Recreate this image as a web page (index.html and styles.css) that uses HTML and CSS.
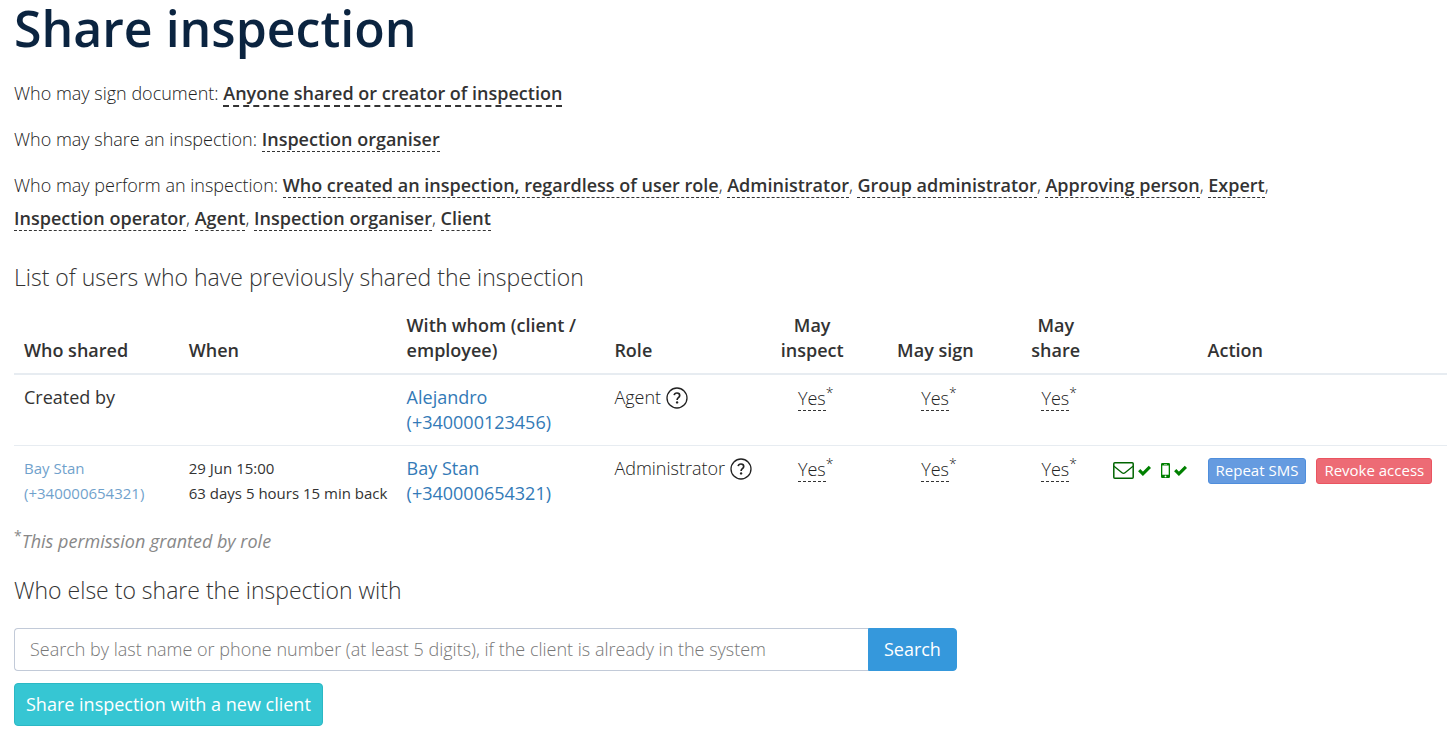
FILE: index.html
```
<!DOCTYPE html>
<html lang="en">
  <head>
    <meta charset="UTF-8" />
    <meta name="viewport" content="width=device-width, initial-scale=1.0" />
    <title>Share inspection</title>
    <link rel="stylesheet" href="styles.css">
  </head>
  <body>
    <svg class="sprite" aria-hidden="true">
      <symbol id="icon-help" viewBox="0 0 22 22">
        <circle cx="11" cy="11" r="10" fill="none" stroke="currentColor" stroke-width="1.3" />
        <path d="M8.200 8.200C8.400 6.700 9.500 6 11 6c1.700 0 2.700.9 2.700 2.400 0 2.300-2.600 2.300-2.600 4.500" fill="none" stroke="currentColor" stroke-width="1.700" />
        <circle cx="11.1" cy="15.400" r="1.200" fill="currentColor" />
      </symbol>
      <symbol id="icon-mail" viewBox="0 0 21 17">
        <rect x="0.800" y="0.800" width="19.400" height="15.400" rx="1" fill="none" stroke="currentColor" stroke-width="1.500" />
        <path d="M1 4.200l8 6.600q1.500 1.200 3 0l8-6.600" fill="none" stroke="currentColor" stroke-width="1.300" />
      </symbol>
      <symbol id="icon-check" viewBox="0 0 13 11">
        <path d="M1.200 5.200l3.700 3.600 7-7" fill="none" stroke="currentColor" stroke-width="3.200" />
      </symbol>
      <symbol id="icon-phone" viewBox="0 0 9 15">
        <path fill="currentColor" fill-rule="evenodd" d="M1.200 0h6.600Q9 0 9 1.200v12.600Q9 15 7.800 15H1.200Q0 15 0 13.800V1.200Q0 0 1.200 0zM1.300 2.500v9.200h6.400V2.500zM3 1v.6h3V1zM4.500 12.500a.9.900 0 1 0 0 1.800.9.900 0 0 0 0-1.800z" />
      </symbol>
    </svg>

    <main class="page">
      <h1 class="title">Share inspection</h1>

      <p class="rule">Who may sign document: <a href="#" class="editable editable-strong">Anyone shared or creator of inspection</a></p>
      <p class="rule">Who may share an inspection: <a href="#" class="editable">Inspection organiser</a></p>
      <p class="rule rule-long">
        Who may perform an inspection:
        <a href="#" class="editable">Who created an inspection, regardless of user role</a>,
        <a href="#" class="editable">Administrator</a>,
        <a href="#" class="editable">Group administrator</a>,
        <a href="#" class="editable">Approving person</a>,
        <a href="#" class="editable">Expert</a>,
        <a href="#" class="editable">Inspection operator</a>,
        <a href="#" class="editable">Agent</a>,
        <a href="#" class="editable">Inspection organiser</a>,
        <a href="#" class="editable">Client</a>
      </p>

      <h3 class="subtitle">List of users who have previously shared the inspection</h3>
      <table class="shares">
        <colgroup>
          <col class="col-who" />
          <col class="col-when" />
          <col class="col-whom" />
          <col class="col-role" />
          <col class="col-inspect" />
          <col class="col-sign" />
          <col class="col-share" />
          <col class="col-status" />
          <col class="col-action" />
        </colgroup>
        <thead>
          <tr>
            <th>Who shared</th>
            <th>When</th>
            <th>With whom (client / employee)</th>
            <th>Role</th>
            <th class="center">May inspect</th>
            <th class="center">May sign</th>
            <th class="center">May share</th>
            <th></th>
            <th>Action</th>
          </tr>
        </thead>
        <tbody>
          <tr>
            <td>Created by</td>
            <td></td>
            <td><a href="#">Alejandro (+340000123456)</a></td>
            <td><div class="role">Agent <svg class="icon-help"><use href="#icon-help" /></svg></div></td>
            <td class="center"><a href="#" class="yes">Yes</a><sup>*</sup></td>
            <td class="center"><a href="#" class="yes">Yes</a><sup>*</sup></td>
            <td class="center"><a href="#" class="yes">Yes</a><sup>*</sup></td>
            <td></td>
            <td></td>
          </tr>
          <tr>
            <td class="small"><a href="#" class="muted">Bay Stan (+340000654321)</a></td>
            <td class="small">29 Jun 15:00<br />63 days 5 hours 15 min back</td>
            <td><a href="#">Bay Stan (+340000654321)</a></td>
            <td><div class="role">Administrator <svg class="icon-help"><use href="#icon-help" /></svg></div></td>
            <td class="center"><a href="#" class="yes">Yes</a><sup>*</sup></td>
            <td class="center"><a href="#" class="yes">Yes</a><sup>*</sup></td>
            <td class="center"><a href="#" class="yes">Yes</a><sup>*</sup></td>
            <td>
              <div class="status">
                <span class="sent"><svg class="icon-mail"><use href="#icon-mail" /></svg><svg class="icon-check"><use href="#icon-check" /></svg></span>
                <span class="sent"><svg class="icon-phone"><use href="#icon-phone" /></svg><svg class="icon-check"><use href="#icon-check" /></svg></span>
              </div>
            </td>
            <td>
              <div class="actions">
                <button type="button" class="btn-xs btn-repeat">Repeat SMS</button>
                <button type="button" class="btn-xs btn-revoke">Revoke access</button>
              </div>
            </td>
          </tr>
        </tbody>
      </table>
      <p class="note"><sup>*</sup><em>This permission granted by role</em></p>

      <h3 class="subtitle">Who else to share the inspection with</h3>
      <form class="search">
        <input type="text" class="search-input" aria-label="Search client" placeholder="Search by last name or phone number (at least 5 digits), if the client is already in the system" />
        <button type="button" class="btn btn-search">Search</button>
      </form>
      <button type="button" class="btn btn-new">Share inspection with a new client</button>
    </main>
  </body>
</html>
```
FILE: styles.css
```
* {
  box-sizing: border-box;
}
body {
  margin: 0;
  background: #fff;
  color: #333;
  font-family: "Open Sans", sans-serif;
  font-size: 18px;
  line-height: 25px;
}
a {
  color: #337ab7;
  text-decoration: none;
}
.sprite {
  display: none;
}
.page {
  padding: 0 9px 0 14px;
}
.title {
  margin: 0;
  color: #0b2440;
  font-size: 50px;
  font-weight: 600;
  line-height: 56px;
}

/* permissions */
.rule {
  margin: 0 0 13px;
  color: #222;
  font-weight: 300;
  line-height: 33px;
}
.title + .rule {
  margin-top: 21px;
}
.rule-long {
  max-width: 1300px;
  margin-bottom: 26px;
}
.editable {
  color: #333;
  font-weight: 600;
  border-bottom: 1px dashed #333;
}
.editable-strong {
  border-bottom-width: 2px;
}
.subtitle {
  margin: 20px 0 10px;
  font-size: 23px;
  font-weight: 300;
  line-height: 32px;
}

/* table */
.shares {
  width: 100%;
  table-layout: fixed;
  border-collapse: separate;
  border-spacing: 0;
}
.col-who { width: 11.5%; }
.col-when { width: 15.2%; }
.col-whom { width: 14.5%; }
.col-role { width: 11%; }
.col-inspect { width: 7%; }
.col-sign { width: 10.2%; }
.col-share { width: 6.6%; }
.col-status { width: 6.6%; }
.col-action { width: 17.4%; }
.shares th,
.shares td {
  padding: 10px;
  text-align: left;
  vertical-align: top;
}
.shares th {
  border-bottom: 2px solid #e7ecf1;
  font-weight: 600;
  vertical-align: bottom;
}
.shares tr + tr td {
  border-top: 1px solid #e7ecf1;
}
.shares .center {
  text-align: center;
}
.shares td.center {
  padding-top: 11px;
  color: #222;
  font-weight: 300;
}
/* keeps the asterisk out of the centering */
.center sup {
  margin-right: -7px;
}
.shares .small {
  font-size: 15px;
  white-space: nowrap;
}
.shares .muted {
  display: block;
  white-space: normal;
  opacity: 0.7;
}
.role {
  display: flex;
  align-items: center;
  gap: 5px;
  color: #222;
  font-weight: 300;
}
.yes {
  color: #222;
  border-bottom: 1px dashed #333;
}
sup {
  font-size: 14px;
  line-height: 0;
}
.icon-help {
  flex-shrink: 0;
  width: 22px;
  height: 22px;
}
.status {
  display: flex;
  gap: 10px;
  padding-top: 6px;
  color: #008000;
}
.sent {
  display: flex;
  align-items: center;
  gap: 4px;
}
.icon-mail {
  width: 21px;
  height: 17px;
  color: #006400;
}
.icon-phone {
  width: 9px;
  height: 15px;
}
.icon-check {
  width: 13px;
  height: 11px;
}
.actions {
  display: flex;
  gap: 10px;
  margin-right: -10px;
  padding-top: 2px;
}
.note {
  margin: 13px 0 0;
  color: #888;
}

/* buttons */
button {
  color: #fff;
  font-family: inherit;
  cursor: pointer;
}
.btn-xs {
  height: 26px;
  padding: 0 7px 2px;
  border: 1px solid;
  border-radius: 3px;
  font-size: 15px;
  line-height: 22px;
  white-space: nowrap;
}
.btn-repeat {
  background: #659be0;
  border-color: #4f8edc;
}
.btn-revoke {
  background: #ed6b75;
  border-color: #ea5460;
}
.btn {
  padding: 8px 15px;
  border: 1px solid;
  border-radius: 4px;
  font-size: 18px;
  line-height: 25px;
}
.btn-search {
  background: #3598dc;
  border-color: #3598dc;
  border-radius: 0 4px 4px 0;
}
.btn-new {
  padding: 8px 11px;
  background: #36c6d3;
  border-color: #2bb8c4;
}

/* search */
.search {
  display: flex;
  width: 65.8%;
  margin: 22px 0 12px;
}
.search-input {
  flex: 1;
  min-width: 0;
  padding: 8px 15px;
  border: 1px solid #c2cad8;
  border-right: 0;
  border-radius: 4px 0 0 4px;
  color: #555;
  font: inherit;
}
.search-input::placeholder {
  color: #777;
  font-weight: 300;
}
```
